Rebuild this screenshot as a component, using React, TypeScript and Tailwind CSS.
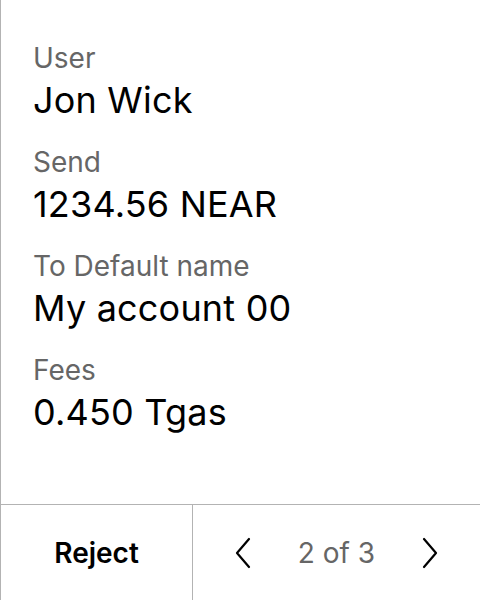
const rows = [
  { label: "User", value: "Jon Wick" },
  { label: "Send", value: "1234.56 NEAR" },
  { label: "To Default name", value: "My account 00" },
  { label: "Fees", value: "0.450 Tgas" },
];

const Chevron = ({ dir }: { dir: "left" | "right" }) => (
  <svg width="20" height="32" viewBox="0 0 20 32" fill="none">
    <path
      d={dir === "left" ? "M16 2 L4 16 L16 30" : "M4 2 L16 16 L4 30"}
      stroke="#000"
      strokeWidth="2.2"
      strokeLinecap="round"
      strokeLinejoin="round"
    />
  </svg>
);

export default function App() {
  return (
    <div
      className="flex h-[600px] w-[480px] flex-col border-l border-[#b3b3b3] bg-white text-black"
      style={{ fontFamily: "Inter, 'Noto Sans', sans-serif" }}
    >
      <div className="flex flex-1 flex-col pl-[32px] pt-[40px]">
        {rows.map((r) => (
          <div key={r.label} className="mb-[20px] flex flex-col">
            <span className="text-[28px] leading-[36px] text-[#666666]">{r.label}</span>
            <span className="text-[36px] leading-[48px] tracking-[0.2px]">{r.value}</span>
          </div>
        ))}
      </div>
      <div className="flex h-[96px] border-t border-[#b3b3b3]">
        <div className="flex w-[192px] items-center justify-center border-r border-[#b3b3b3]">
          <span className="text-[28px] font-semibold">Reject</span>
        </div>
        <div className="flex flex-1 items-center justify-between px-[40px]">
          <Chevron dir="left" />
          <span className="text-[28px] text-[#666666]">2 of 3</span>
          <Chevron dir="right" />
        </div>
      </div>
    </div>
  );
}
